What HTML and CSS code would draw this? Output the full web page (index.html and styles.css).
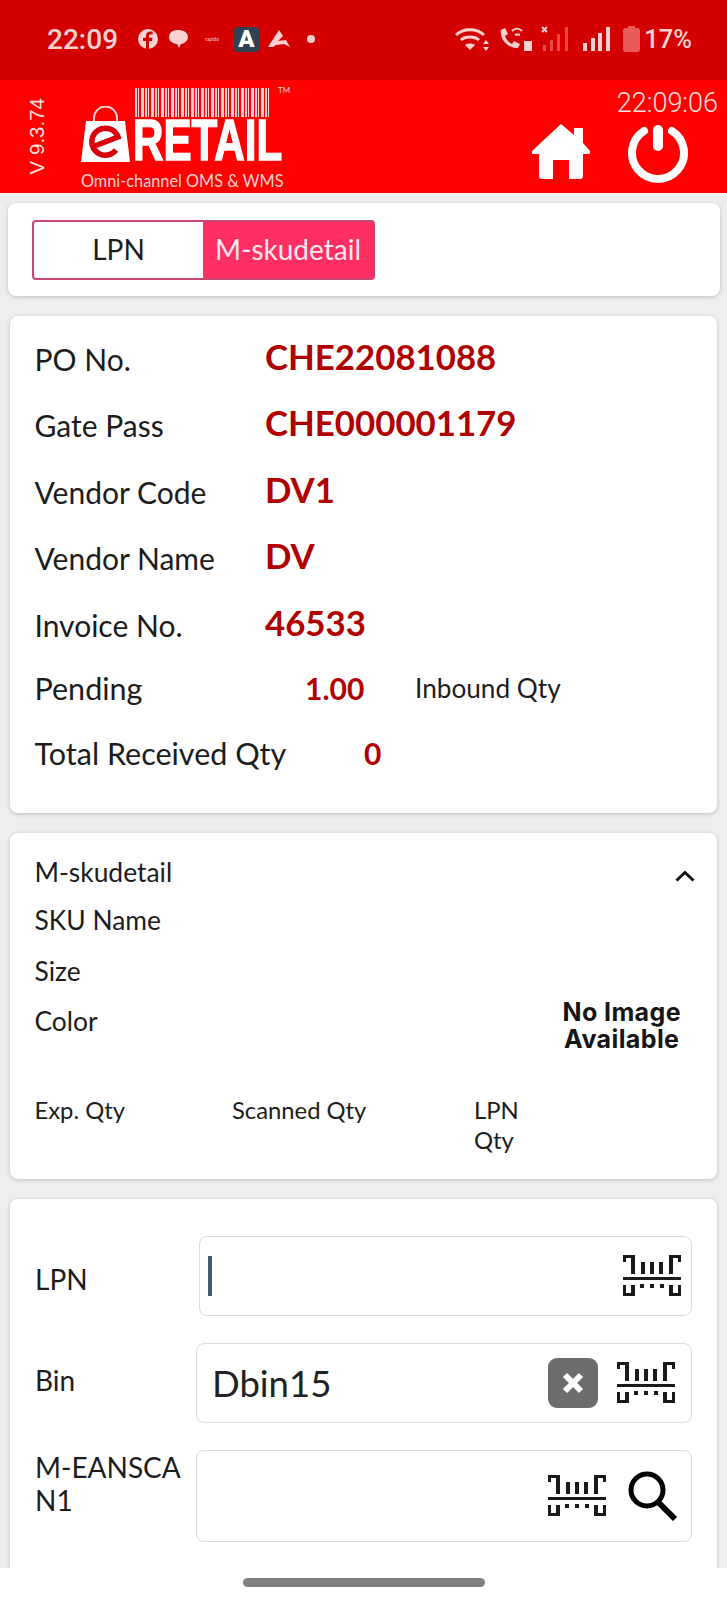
FILE: index.html
```html
<!DOCTYPE html>
<html lang="en">
<head>
  <meta charset="UTF-8" />
  <meta name="viewport" content="width=device-width, initial-scale=1.0" />
  <title>eRetail</title>
  <link rel="stylesheet" href="styles.css">
</head>
<body>
  <svg width="0" height="0" class="defs">
    <defs>
      <symbol id="scan" viewBox="0 0 58 44">
        <path fill="#1a1a1a" d="M0 1h12v19H8V4H3v4H0zM58 1H46v19h4V4h5v4h3zM18 8h4v12h-4zM27 8h4v12h-4zM36 8h4v12h-4zM0 23h58v3H0zM0 31h3v8h5v-8h4v11H0zM58 31h-3v8h-5v-8h-4v11h12zM17 30h4v4h-4zM27 30h4v4h-4zM37 30h4v4h-4z" />
      </symbol>
    </defs>
  </svg>

  <div class="statusbar">
    <div class="status-left">
      <span class="clock">22:09</span>
      <svg class="st-icon" width="22" height="22" viewBox="0 0 22 22"><circle cx="11" cy="11" r="10" fill="#fbd0d0"/><path d="M12 21v-8h3l.5-3.2H12V8c0-1 .5-1.6 1.7-1.6h1.9V3.6C15 3.500 14.200 3.400 13.300 3.400 10.700 3.400 9 5 9 7.600v2.200H6V13h3v8z" fill="#d40000"/></svg>
      <svg class="st-icon" width="21" height="20" viewBox="0 0 21 20"><path d="M10 1c5.500 0 10 2.500 10 7 0 4-3.500 6.500-7 7l-2 4-2-4C4 14.500 1 12 1 8c0-4.500 4-7 9-7z" fill="#fbd0d0"/></svg>
      <span class="rapido">rapido</span>
      <span class="app-a">A</span>
      <svg class="st-icon" width="22" height="18" viewBox="0 0 22 18"><path d="M0 17 11 0l4 6-5 5 8-1 4 7-6-3-8 1-3 2z" fill="#fbd0d0"/></svg>
      <span class="dot"></span>
    </div>
    <div class="status-right">
      <svg class="st-wifi" width="35" height="24" viewBox="0 0 35 24"><g fill="none" stroke="#fbd0d0" stroke-width="3"><path d="M1 8c7-7 21-7 28 0"/><path d="M6 13c4-4 14-4 18 0"/></g><path d="M10 18c2-2 8-2 10 0l-5 5z" fill="#fbd0d0"/><path d="M31 13l3 4h-6zM31 24l-3-4h6z" fill="#fbd0d0"/></svg>
      <svg class="st-call" width="33" height="26" viewBox="0 0 33 26"><path d="M2 4l4-2 3 6-3 2c1 3 3 6 7 8l2-3 6 3-2 4c-9 1-19-9-17-18z" fill="#fbd0d0"/><path d="M13 5c3-3 7-3 10 0M16 9c2-1 3-1 5 0" fill="none" stroke="#fbd0d0" stroke-width="2"/><rect x="25" y="15" width="8" height="10" fill="#fbd0d0"/></svg>
      <svg class="st-sig1" width="28" height="26" viewBox="0 0 28 26"><path d="M1 1l5 5M6 1L1 6" stroke="#fbd0d0" stroke-width="2"/><g fill="#e84a4a"><rect x="2" y="19" width="3" height="6"/><rect x="9" y="14" width="3" height="11"/><rect x="16" y="8" width="3" height="17"/><rect x="24" y="1" width="3" height="24"/></g></svg>
      <svg class="st-sig2" width="27" height="26" viewBox="0 0 27 26"><g fill="#fbd0d0"><rect x="0" y="17" width="4" height="8"/><rect x="8" y="12" width="4" height="13"/><rect x="15" y="7" width="4" height="18"/><rect x="23" y="1" width="4" height="24"/></g></svg>
      <svg class="st-bat" width="17" height="26" viewBox="0 0 17 26"><path d="M5 0h7v2h2a3 3 0 0 1 3 3v18a3 3 0 0 1-3 3H3a3 3 0 0 1-3-3V5a3 3 0 0 1 3-3h2z" fill="#ea5a5a"/></svg>
      <span class="battery">17%</span>
    </div>
  </div>

  <header class="appbar">
    <div class="version"><span>V 9.3.74</span></div>
    <div class="logo">
      <div class="barcode"></div>
      <span class="tm">TM</span>
      <div class="logo-main">
        <svg class="bag" width="49" height="57" viewBox="0 0 49 57">
          <path d="M13 18v-6a11 11 0 0 1 23 0v6" fill="none" stroke="#fbd0d0" stroke-width="2"/>
          <path d="M5 15h39l5 41H0z" fill="#fff"/>
          <path d="M11 41 37 31A13.500 13.500 0 1 0 35 44" fill="none" stroke="#d8000c" stroke-width="5.500"/>
        </svg>
        <span class="logo-word">RETAIL</span>
      </div>
      <div class="logo-tag">Omni-channel OMS &amp; WMS</div>
    </div>
    <div class="appbar-right">
      <div class="time">22:09:06</div>
      <div class="appbar-icons">
        <svg width="58" height="58" viewBox="0 0 58 58"><path d="M29 1 42 12V5h9v15l7 8c.8 1.500 0 3-2 3h-5v22c0 2-1 3-3 3H37V37H21v19H10c-2 0-3-1-3-3V31H2c-2 0-2.800-1.500-2-3z" fill="#fff"/></svg>
        <svg width="60" height="60" viewBox="0 0 60 60"><path d="M16 8A26 26 0 1 0 44 8" fill="none" stroke="#fff" stroke-width="8" stroke-linecap="round"/><path d="M30 7v16" stroke="#fff" stroke-width="10" stroke-linecap="round"/></svg>
      </div>
    </div>
  </header>

  <main class="content">
    <section class="card tabs-card">
      <div class="tabs">
        <div class="tab">LPN</div>
        <div class="tab tab-active">M-skudetail</div>
      </div>
    </section>

    <section class="card info-card">
      <div class="info-row"><span class="info-label">PO No.</span><span class="info-value">CHE22081088</span></div>
      <div class="info-row"><span class="info-label">Gate Pass</span><span class="info-value">CHE000001179</span></div>
      <div class="info-row"><span class="info-label">Vendor Code</span><span class="info-value">DV1</span></div>
      <div class="info-row"><span class="info-label">Vendor Name</span><span class="info-value">DV</span></div>
      <div class="info-row"><span class="info-label">Invoice No.</span><span class="info-value">46533</span></div>
      <div class="info-row qty-row">
        <span class="pending-label">Pending</span>
        <span class="pending-value">1.00</span>
        <span class="inbound-label">Inbound Qty</span>
      </div>
      <div class="info-row qty-row">
        <span class="total-label">Total Received Qty</span>
        <span class="total-value">0</span>
      </div>
    </section>

    <section class="card sku-card">
      <div class="sku-top">
        <div class="sku-lines">
          <div class="sku-line">M-skudetail</div>
          <div class="sku-line">SKU Name</div>
          <div class="sku-line">Size</div>
          <div class="sku-line">Color</div>
        </div>
        <div class="sku-side">
          <svg class="chevron" width="20" height="12" viewBox="0 0 20 12"><path d="M1.500 10.500 10 2.500l8.500 8" fill="none" stroke="#111" stroke-width="3"/></svg>
          <div class="no-image">No Image<br>Available</div>
        </div>
      </div>
      <div class="sku-qty">
        <div class="qty-exp">Exp. Qty</div>
        <div class="qty-scan">Scanned Qty</div>
        <div class="qty-lpn">LPN<br>Qty</div>
      </div>
    </section>

    <section class="card form-card">
      <div class="form-row">
        <label class="form-label label-low">LPN</label>
        <div class="field field-lpn">
          <span class="caret"></span>
          <svg class="scan-icon" width="58" height="44"><use href="#scan"/></svg>
        </div>
      </div>
      <div class="form-row">
        <label class="form-label label-high">Bin</label>
        <div class="field">
          <span class="field-text">Dbin15</span>
          <span class="clear-btn">
            <svg width="24" height="24" viewBox="0 0 24 24"><path d="M4 4l16 16M20 4 4 20" stroke="#fff" stroke-width="6"/></svg>
          </span>
          <svg class="scan-icon" width="58" height="44"><use href="#scan"/></svg>
        </div>
      </div>
      <div class="form-row">
        <label class="form-label label-wrap">M-EANSCA<br>N1</label>
        <div class="field field-tall">
          <svg class="scan-icon" width="58" height="44"><use href="#scan"/></svg>
          <svg class="search-icon" width="52" height="52" viewBox="0 0 52 52"><circle cx="21" cy="20" r="16" fill="none" stroke="#000" stroke-width="5"/><path d="M32 32l17 17" stroke="#000" stroke-width="6"/></svg>
        </div>
      </div>
    </section>
  </main>

  <div class="navbar"><span class="nav-pill"></span></div>
</body>
</html>
```

FILE: styles.css
```css
* {
  box-sizing: border-box;
}
html, body {
  height: 1600px;
  overflow: hidden;
}
body {
  position: relative;
  margin: 0;
  background: #eeeeee;
  font-family: Lato, "Open Sans", sans-serif;
  color: #1c1c1c;
}
.defs {
  position: absolute;
}

/* status bar */
.statusbar {
  height: 80px;
  background: #d40000;
  color: #fbd0d0;
  display: flex;
  justify-content: space-between;
  align-items: center;
  padding: 0 35px 2px 47px;
}
.status-left,
.status-right {
  display: flex;
  align-items: center;
}
.status-left {
  gap: 9px;
}
.clock {
  font-family: Roboto, sans-serif;
  font-size: 28px;
  font-weight: 500;
  margin-right: 10px;
}
.battery {
  font-family: Roboto, sans-serif;
  font-size: 25.500px;
  font-weight: 500;
  margin-left: 4px;
}
.st-call {
  margin-left: 9px;
}
.st-sig1 {
  margin-left: 9px;
}
.st-sig2 {
  margin-left: 14px;
}
.st-bat {
  margin-left: 13px;
}
.rapido {
  font-size: 5px;
  width: 24px;
  margin-left: 2px;
  text-align: center;
}
.app-a {
  width: 25px;
  height: 25px;
  margin-left: 1px;
  border-radius: 4px;
  background: #2f4254;
  color: #fff;
  font-family: Roboto, sans-serif;
  font-weight: 900;
  font-size: 24px;
  line-height: 25px;
  text-align: center;
}
.dot {
  width: 8px;
  height: 8px;
  margin-left: 8px;
  border-radius: 50%;
  background: #fbd0d0;
}

/* app bar */
.appbar {
  height: 113px;
  background: #ff0000;
  display: flex;
  color: #fff;
}
.version {
  width: 81px;
  padding-left: 25px;
  display: flex;
  align-items: center;
  font-family: "Liberation Sans", sans-serif;
  font-size: 20.500px;
  color: #fde0e0;
}
.version span {
  writing-mode: vertical-rl;
  transform: rotate(180deg);
  white-space: nowrap;
}
.logo {
  position: relative;
  width: 210px;
  padding-top: 8px;
}
.barcode {
  width: 135px;
  height: 29px;
  margin-left: 54px;
  background: repeating-linear-gradient(90deg, #fbd0d0 0 2px, #ff0000 2px 3px, #fbd0d0 3px 4px, #ff0000 4px 6px, #fbd0d0 6px 9px, #ff0000 9px 10px);
}
.tm {
  position: absolute;
  top: 5px;
  left: 197px;
  font-size: 8px;
  color: #fbd0d0;
}
.logo-main {
  display: flex;
  align-items: flex-end;
  margin-top: -11px;
}
.bag {
  flex: none;
}
.logo-word {
  font-family: "Liberation Sans", sans-serif;
  font-weight: 700;
  font-size: 57px;
  line-height: 46px;
  margin-left: 3px;
  -webkit-text-stroke: 1.500px #fff;
  transform: scaleX(0.74);
  transform-origin: left center;
  white-space: nowrap;
}
.logo-tag {
  margin-top: 9px;
  font-size: 16.300px;
  line-height: 18px;
  white-space: nowrap;
  color: #fbd0d0;
}
.appbar-right {
  margin-left: auto;
  padding: 10px 9px 0 0;
  display: flex;
  flex-direction: column;
  align-items: flex-end;
}
.time {
  font-family: Roboto, sans-serif;
  font-weight: 300;
  font-size: 27px;
  line-height: 26px;
  color: #fde0e0;
}
.appbar-icons {
  display: flex;
  align-items: flex-start;
  gap: 38px;
  margin: 7px 30px 0 0;
}

/* cards */
.content {
  padding: 10px 10px 0;
}
.card {
  background: #fff;
  border-radius: 8px;
  box-shadow: 0 1px 4px rgba(0, 0, 0, 0.2);
  margin-bottom: 20px;
}
.tabs-card {
  margin-left: -2px;
  margin-right: -3px;
  height: 93px;
  padding: 17px 24px;
}
.tabs {
  display: flex;
  width: 343px;
  height: 60px;
  border: 2px solid #c8476e;
  border-radius: 4px;
  font-size: 28px;
}
.tab {
  flex: 1;
  display: flex;
  align-items: center;
  justify-content: center;
  padding-bottom: 2px;
}
.tab-active {
  flex: none;
  width: 170px;
  background: #ff2f63;
  color: #fde8ee;
}
.info-card {
  height: 497px;
  padding: 7px 25px 0 24.500px;
}
.info-row {
  display: flex;
  align-items: center;
  height: 66.500px;
}
.info-label {
  width: 230.500px;
  font-size: 30px;
  padding-top: 5px;
}
.info-value {
  font-size: 34.800px;
  font-weight: 700;
  color: #b00000;
}
.qty-row {
  height: 65px;
  font-size: 30.500px;
}
.pending-value,
.total-value {
  font-size: 30px;
  font-weight: 700;
  color: #b00000;
}
.pending-label {
  width: 270.500px;
}
.pending-value {
  width: 110px;
}
.inbound-label {
  font-size: 26.200px;
}
.total-label {
  width: 329.500px;
}

.sku-card {
  height: 346px;
  padding: 24px 25px 0 24.500px;
  font-size: 26.400px;
}
.sku-top {
  display: flex;
  justify-content: space-between;
  height: 238px;
}
.sku-line {
  height: 50.500px;
  line-height: 30px;
}
.sku-line:first-child {
  height: 48px;
}
.sku-side {
  display: flex;
  flex-direction: column;
  align-items: flex-end;
}
.chevron {
  margin: 13px -3px 0 0;
}
.no-image {
  margin: 117px 11px 0 0;
  font-family: Inter, sans-serif;
  font-weight: 700;
  font-size: 25px;
  line-height: 27px;
  letter-spacing: 0.4px;
  text-align: center;
  color: #151515;
}
.sku-qty {
  display: flex;
  font-size: 23.800px;
  line-height: 30px;
}
.qty-exp {
  width: 197.500px;
}
.qty-scan {
  width: 242px;
}

.form-card {
  height: 420px;
  padding: 37px 25px 0;
}
.form-row {
  display: flex;
  align-items: center;
  margin-bottom: 27px;
}
.form-label {
  width: 161px;
  flex: none;
  font-size: 28px;
  line-height: 33px;
}
.label-low {
  padding-top: 6px;
}
.label-high {
  padding-bottom: 6px;
}
.label-wrap {
  padding-bottom: 24px;
}
.field {
  flex: 1;
  height: 80px;
  border: 1.500px solid #dcdcdc;
  border-radius: 8px;
  display: flex;
  align-items: center;
  justify-content: flex-end;
  gap: 19px;
  padding-right: 16px;
}
.field-lpn {
  margin-left: 3px;
  padding-right: 10px;
  justify-content: space-between;
  padding-left: 8px;
}
.field-tall {
  height: 92px;
  gap: 20px;
  padding-right: 13px;
}
.caret {
  width: 4px;
  height: 40px;
  background: #44596b;
}
.field-text {
  margin-right: auto;
  padding-left: 15px;
  font-size: 36.500px;
  color: #222;
}
.clear-btn {
  width: 50px;
  height: 50px;
  border-radius: 9px;
  background: #6c6c6c;
  display: flex;
  align-items: center;
  justify-content: center;
}
.scan-icon,
.search-icon {
  flex: none;
}

/* bottom nav */
.navbar {
  position: absolute;
  left: 0;
  right: 0;
  bottom: 0;
  height: 32px;
  background: #fff;
}
.nav-pill {
  position: absolute;
  left: 243px;
  top: 10px;
  width: 242px;
  height: 9px;
  border-radius: 5px;
  background: #808080;
}
```
